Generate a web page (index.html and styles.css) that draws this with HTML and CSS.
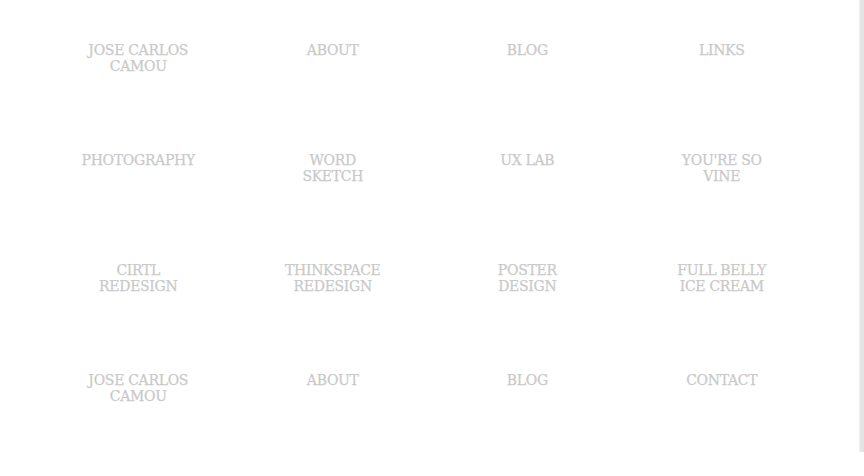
FILE: index.html
```html
<!DOCTYPE html>
<html>
<head>
<meta charset="utf-8">
<link rel="stylesheet" href="styles.css">
</head>
<body>
<div class="page">
  <nav class="grid">
    <a class="tile">JOSE CARLOS<br>CAMOU</a>
    <a class="tile">ABOUT</a>
    <a class="tile">BLOG</a>
    <a class="tile">LINKS</a>
    <a class="tile">PHOTOGRAPHY</a>
    <a class="tile">WORD<br>SKETCH</a>
    <a class="tile">UX LAB</a>
    <a class="tile">YOU'RE SO<br>VINE</a>
    <a class="tile">CIRTL<br>REDESIGN</a>
    <a class="tile">THINKSPACE<br>REDESIGN</a>
    <a class="tile">POSTER<br>DESIGN</a>
    <a class="tile">FULL BELLY<br>ICE CREAM</a>
    <a class="tile">JOSE CARLOS<br>CAMOU</a>
    <a class="tile">ABOUT</a>
    <a class="tile">BLOG</a>
    <a class="tile">CONTACT</a>
  </nav>
  <div class="scrollbar"></div>
</div>
</body>
</html>
```
FILE: styles.css
```css
html, body {
  margin: 0;
  padding: 0;
  background: #ffffff;
  height: 100%;
  overflow: hidden;
}
.page {
  display: flex;
  align-items: flex-start;
  height: 476px;
}
.grid {
  flex: 1;
  display: grid;
  grid-template-columns: repeat(4, 194.5px);
  grid-auto-rows: 110px;
  padding: 43px 0 0 41px;
  align-content: start;
}
.tile {
  font-family: "DejaVu Serif", serif;
  font-size: 14px;
  line-height: 15.5px;
  letter-spacing: -0.3px;
  color: #c9c9c9;
  text-align: center;
  text-decoration: none;
  -webkit-text-stroke: 0.25px #c9c9c9;
}
.scrollbar {
  width: 4px;
  height: 452px;
  background: #e4e4e4;
  border-left: 1px solid #f0f0f0;
}
```
